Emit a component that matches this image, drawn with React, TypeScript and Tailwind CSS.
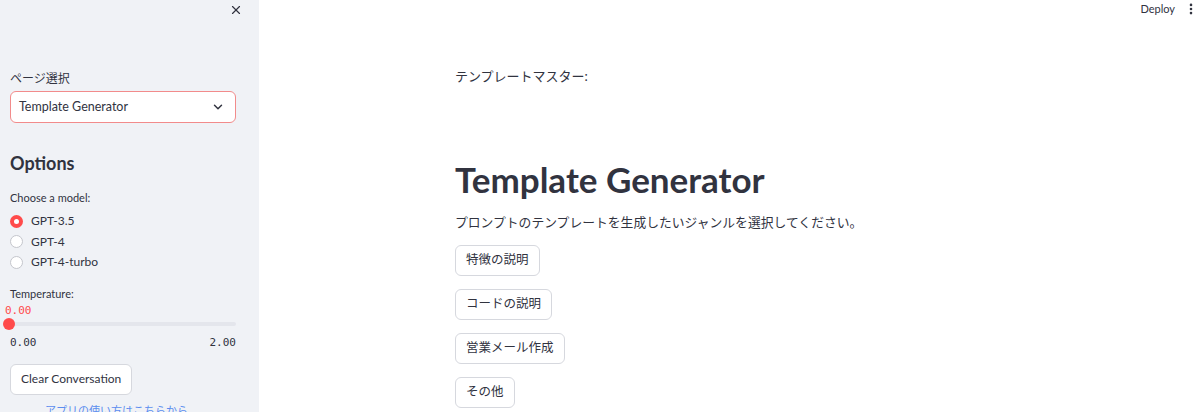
import { X, ChevronDown, EllipsisVertical } from 'lucide-react'

const font = { fontFamily: 'Lato, "Noto Sans CJK JP", sans-serif' }
const mono = { fontFamily: '"DejaVu Sans Mono", "Liberation Mono", monospace' }

const models = ['GPT-3.5', 'GPT-4', 'GPT-4-turbo']
const genres = ['特徴の説明', 'コードの説明', '営業メール作成', 'その他']

function Sidebar() {
  return (
    <aside className="w-[259px] shrink-0 bg-[#f0f2f6] px-[10px] text-[#31333f] overflow-hidden">
      <div className="flex justify-end h-[20px] items-center pr-[6px]">
        <X className="w-[14px] h-[14px] text-[#31333f]" strokeWidth={2} />
      </div>

      <div className="mt-[50px] text-[12px] leading-[18px]">ページ選択</div>
      <div className="mt-[3px] h-[32px] w-[226px] rounded-[6px] border border-[#f28b8b] bg-white flex items-center justify-between pl-[8px] pr-[10px] text-[12.5px]">
        <span>Template Generator</span>
        <ChevronDown className="w-[14px] h-[14px]" strokeWidth={2.5} />
      </div>

      <h2 className="mt-[28px] text-[18px] leading-[24px] font-bold">Options</h2>
      <div className="mt-[15px] text-[11px] leading-[16px]">Choose a model:</div>
      <div className="mt-[5px] flex flex-col">
        {models.map((m, i) => (
          <label key={m} className="flex items-center h-[20.5px] gap-[8px] text-[12px]">
            {i === 0 ? (
              <span className="w-[13px] h-[13px] rounded-full bg-[#ff4b4b] flex items-center justify-center">
                <span className="w-[5px] h-[5px] rounded-full bg-white" />
              </span>
            ) : (
              <span className="w-[13px] h-[13px] rounded-full border border-[#c4c6cc] bg-white" />
            )}
            <span>{m}</span>
          </label>
        ))}
      </div>

      <div className="mt-[13px] text-[11px] leading-[16px]">Temperature:</div>
      <div className="mt-[2px] -ml-[5px] text-[11px] leading-[14px] text-[#ff4b4b]" style={mono}>0.00</div>
      <div className="relative mt-[4px] h-[4px] w-[226px] rounded-full bg-[#e4e6ec]">
        <span className="absolute -left-[7px] -top-[4px] w-[12px] h-[12px] rounded-full bg-[#ff4b4b]" />
      </div>
      <div className="mt-[10px] flex justify-between w-[226px] text-[11px] leading-[14px] text-[#31333f]" style={mono}>
        <span>0.00</span>
        <span>2.00</span>
      </div>

      <button className="mt-[14px] h-[31px] px-[10px] rounded-[6px] border border-[#d6d8de] bg-white text-[12px]">
        Clear Conversation
      </button>
      <div className="mt-[9px] pl-[35px] text-[11px] leading-[14px] text-[#5b8def] whitespace-nowrap">
        アプリの使い方はこちらから
      </div>
    </aside>
  )
}

export default function App() {
  return (
    <div className="w-[1200px] h-[412px] overflow-hidden flex bg-white text-[#31333f]" style={font}>
      <Sidebar />
      <main className="flex-1 flex flex-col">
        <div className="h-[18px] flex items-center justify-end gap-[9px] pr-[2px]">
          <span className="text-[11px]">Deploy</span>
          <EllipsisVertical className="w-[14px] h-[14px]" strokeWidth={2.5} />
        </div>
        <div className="pl-[196px]">
          <p className="mt-[48px] text-[13px] leading-[20px]">テンプレートマスター:</p>
          <h1 className="mt-[73px] text-[35px] leading-[40px] font-bold">Template Generator</h1>
          <p className="mt-[13px] text-[12.8px] leading-[20px]">プロンプトのテンプレートを生成したいジャンルを選択してください。</p>
          <div className="mt-[13px] flex flex-col items-start gap-[13px]">
            {genres.map((g) => (
              <button
                key={g}
                className="h-[31px] px-[10px] rounded-[6px] border border-[#d6d8de] bg-white text-[12.5px]"
              >
                {g}
              </button>
            ))}
          </div>
        </div>
      </main>
    </div>
  )
}
